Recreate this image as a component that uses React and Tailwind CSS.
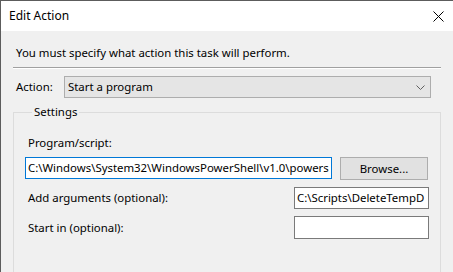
const font = { fontFamily: '"Noto Sans", "Open Sans", Arial, sans-serif' };

const CloseIcon = () => (
  <svg width="11" height="11" viewBox="0 0 11 11" className="block">
    <path d="M0.5 0.5 L10.5 10.5 M10.5 0.5 L0.5 10.5" stroke="#000" strokeWidth="1" fill="none" />
  </svg>
);

const Chevron = () => (
  <svg width="9" height="5" viewBox="0 0 9 5" className="block">
    <path d="M0.5 0.5 L4.5 4.5 L8.5 0.5" stroke="#606060" strokeWidth="1" fill="none" />
  </svg>
);

const TextBox = ({ value = '', width, height = 22, focused = false }) => (
  <div
    className={`bg-white border flex items-center pl-[2px] overflow-hidden whitespace-nowrap ${
      focused ? 'border-[#0078d7]' : 'border-[#7a7a7a]'
    }`}
    style={{ width, height }}
  >
    {value}
  </div>
);

export default function App() {
  return (
    <div
      className="w-[453px] h-[272px] overflow-hidden bg-[#f0f0f0] border-l border-t border-[#5c5c5c] text-[11.4px] leading-[16px] text-black"
      style={font}
    >
      {/* title bar */}
      <div className="h-[30px] bg-white flex items-center justify-between pl-[8px] pr-[9px]">
        <span className="text-[12px]">Edit Action</span>
        <CloseIcon />
      </div>

      <div className="px-[12px] pt-[14px]">
        <p className="pl-[3px]">You must specify what action this task will perform.</p>

        {/* etched separator */}
        <div className="mt-[6px] border-t border-b border-t-[#a0a0a0] border-b-white" />

        {/* action combo */}
        <div className="mt-[7px] flex items-center">
          <span className="w-[51px] pl-[3px] shrink-0">Action:</span>
          <div className="w-[367px] h-[22px] bg-[#e5e5e5] border border-[#adadad] flex items-center justify-between pl-[3px] pr-[5px]">
            <span>Start a program</span>
            <Chevron />
          </div>
        </div>

        {/* settings group */}
        <fieldset className="mt-[6px] h-[200px] w-[428px] border border-[#dcdcdc] pl-[11px] pr-[11px]">
          <legend className="ml-[7px] px-[2px]">Settings</legend>

          <div className="mt-[15px] pl-[3px]">Program/script:</div>
          <div className="mt-[6px] flex items-start justify-between">
            <TextBox value="C:\Windows\System32\WindowsPowerShell\v1.0\powers" width={307} focused />
            <button className="w-[88px] h-[23px] bg-[#e1e1e1] border border-[#adadad] mr-[1px]">Browse...</button>
          </div>

          <div className="mt-[7px] flex items-center justify-between">
            <span className="pl-[3px]">Add arguments (optional):</span>
            <TextBox value="C:\Scripts\DeleteTempD" width={135} />
          </div>

          <div className="mt-[7px] flex items-center justify-between">
            <span className="pl-[3px]">Start in (optional):</span>
            <TextBox width={135} height={23} />
          </div>
        </fieldset>
      </div>
    </div>
  );
}
